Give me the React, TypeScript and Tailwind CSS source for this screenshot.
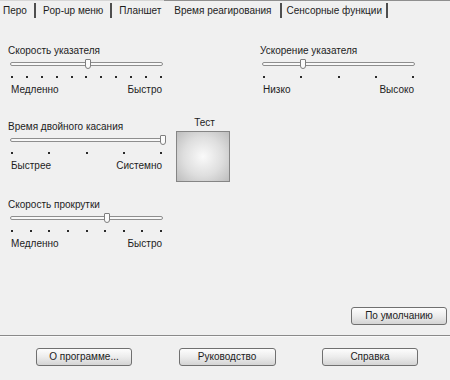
import React from "react";

type SliderProps = {
    label: string;
    ticks: number;
    value: number;
    left: string;
    right: string;
};

// track is 153px wide, ticks run from 2px to 152px inside it
const Slider = ({ label, ticks, value, left, right }: SliderProps) => {
    const thumbLeft = 2 + (value * 150) / (ticks - 1);
    return (
        <div className="w-[157px]">
            <div className="h-[13px] leading-[13px]">{label}</div>
            <div className="h-[14px] flex items-center px-[2px]">
                <div className="relative w-full h-[4px] border border-[#8e8e8e] bg-[#f8f8f8] rounded-[2px]">
                    <div
                        className="absolute top-1/2 w-[6px] h-[10px] -translate-x-1/2 -translate-y-1/2 border border-[#7e7e7e] bg-[#fbfbfb] rounded-t-[1px] rounded-b-[3px]"
                        style={{ left: `${thumbLeft}px` }}
                    />
                </div>
            </div>
            <div className="h-[12px] flex items-center justify-between px-[3px]">
                {Array.from({ length: ticks }).map((_, i) => (
                    <span key={i} className="w-[2px] h-[2px] bg-[#2a2a2a]" />
                ))}
            </div>
            <div className="h-[13px] leading-[13px] flex justify-between px-[3px]">
                <span>{left}</span>
                <span>{right}</span>
            </div>
        </div>
    );
};

const Button = ({ children, className = "" }: { children: React.ReactNode; className?: string }) => (
    <button className={`w-[96px] h-[18px] flex items-center justify-center border border-[#707070] rounded-[3px] bg-gradient-to-b from-[#fdfdfd] via-[#ececec] to-[#d4d4d4] leading-none ${className}`}>
        {children}
    </button>
);

const Sep = () => <span className="w-[2px] h-[15px] bg-[#4e4e4e]" />;

const App = () => {
    return (
        <div className="w-[450px] h-[380px] bg-[#f0f0f0] text-[#1c1c1c] text-[10px] font-['Liberation_Sans','Arial',sans-serif] flex flex-col overflow-hidden">
            {/* Tabs */}
            <div className="h-[20px] flex shrink-0">
                <div className="flex items-center border-t border-[#d6d6d6] pl-[3px] pr-[3px]">
                    <span>Перо</span>
                    <span className="mx-[7px] flex"><Sep /></span>
                    <span>Pop-up меню</span>
                    <span className="mx-[7px] flex"><Sep /></span>
                    <span>Планшет</span>
                </div>
                <div className="flex-1 flex items-center border-t border-[#8f8f8f]">
                    <span className="ml-[10px] mr-[8px]">Время реагирования</span>
                    <Sep />
                    <span className="ml-[5px] mr-[4px]">Сенсорные функции</span>
                    <Sep />
                </div>
            </div>

            {/* Content */}
            <div className="flex-1 flex flex-col pl-[8px] pr-[3px] pb-[10px]">
                <div className="mt-[24px] flex">
                    <Slider label="Скорость указателя" ticks={11} value={5} left="Медленно" right="Быстро" />
                    <div className="ml-[95px]">
                        <Slider label="Ускорение указателя" ticks={5} value={1} left="Низко" right="Высоко" />
                    </div>
                </div>

                <div className="mt-[20px] flex items-start">
                    <div className="pt-[4px]">
                        <Slider label="Время двойного касания" ticks={5} value={4} left="Быстрее" right="Системно" />
                    </div>
                    <div className="ml-[11px] flex flex-col items-center">
                        <div className="h-[13px] leading-[13px] pl-[3px]">Тест</div>
                        <div className="mt-[2px] w-[54px] h-[51px] border border-[#858585] bg-[radial-gradient(circle_at_50%_50%,#fafafa_0%,#dedede_55%,#bdbdbd_100%)]" />
                    </div>
                </div>

                <div className="mt-[16px]">
                    <Slider label="Скорость прокрутки" ticks={9} value={5} left="Медленно" right="Быстро" />
                </div>

                <div className="flex-1" />
                <div className="flex justify-end">
                    <Button>По умолчанию</Button>
                </div>
            </div>

            <div className="h-[1px] bg-[#8a8a8a] shrink-0" />
            <div className="h-[1px] bg-[#fafafa] shrink-0" />

            {/* Bottom buttons */}
            <div className="h-[43px] shrink-0 pt-[11px] pl-[36px] pr-[32px] flex items-start justify-between">
                <Button className="w-[95px]">О программе...</Button>
                <Button className="w-[97px]">Руководство</Button>
                <Button className="w-[95px]">Справка</Button>
            </div>
        </div>
    );
};

export default App;
